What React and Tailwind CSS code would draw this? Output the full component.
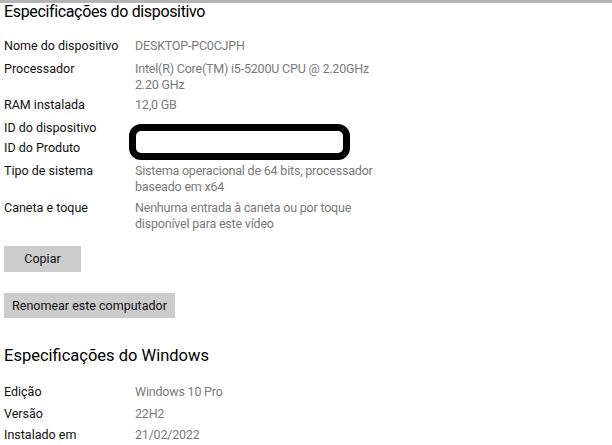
export default function App() {
  const font = { fontFamily: 'Roboto, "Open Sans", sans-serif' };
  return (
    <div className="relative h-[445px] w-[612px] overflow-hidden bg-white text-[12.5px] leading-[16px] text-[#111]" style={font}>
      <div className="h-[3px] bg-[#b4b4b4]" />
      <div className="pl-[4px]">
        <h1 className="-mt-[1px] text-[16px] leading-[20px] tracking-[-0.35px] font-normal text-black">Especificações do dispositivo</h1>

        <div className="mt-[16px] grid grid-cols-[131px_1fr]">
          <div>Nome do dispositivo</div>
          <div className="tracking-[-0.2px] text-[#7a7a7a]">DESKTOP-PC0CJPH</div>
        </div>
        <div className="mt-[7px] grid grid-cols-[131px_1fr]">
          <div>Processador</div>
          <div className="tracking-[-0.2px] text-[#7a7a7a]">Intel(R) Core(TM) i5-5200U CPU @ 2.20GHz<br />2.20 GHz</div>
        </div>
        <div className="mt-[4px] grid grid-cols-[131px_1fr]">
          <div>RAM instalada</div>
          <div className="tracking-[-0.2px] text-[#7a7a7a]">12,0 GB</div>
        </div>
        <div className="mt-[7px] grid grid-cols-[131px_1fr]">
          <div>ID do dispositivo</div>
          <div />
        </div>
        <div className="mt-[4px] grid grid-cols-[131px_1fr]">
          <div>ID do Produto</div>
          <div />
        </div>
        <div className="mt-[7px] grid grid-cols-[131px_1fr]">
          <div>Tipo de sistema</div>
          <div className="tracking-[-0.2px] text-[#7a7a7a]">Sistema operacional de 64 bits, processador<br />baseado em x64</div>
        </div>
        <div className="mt-[5px] grid grid-cols-[131px_1fr]">
          <div>Caneta e toque</div>
          <div className="tracking-[-0.2px] text-[#7a7a7a]">Nenhuma entrada à caneta ou por toque<br />disponível para este vídeo</div>
        </div>

        <button className="mt-[14px] block h-[26px] w-[77px] bg-[#cccccc] text-[12.5px] text-[#111]">Copiar</button>
        <button className="mt-[21px] block h-[25px] w-[171px] bg-[#cccccc] text-[12.5px] text-[#111]">Renomear este computador</button>

        <h2 className="mt-[28px] text-[16.5px] leading-[20px] font-normal text-black">Especificações do Windows</h2>

        <div className="mt-[18px] grid grid-cols-[131px_1fr]">
          <div>Edição</div>
          <div className="tracking-[-0.2px] text-[#7a7a7a]">Windows 10 Pro</div>
        </div>
        <div className="mt-[6px] grid grid-cols-[131px_1fr]">
          <div>Versão</div>
          <div className="tracking-[-0.2px] text-[#7a7a7a]">22H2</div>
        </div>
        <div className="mt-[5px] grid grid-cols-[131px_1fr]">
          <div>Instalado em</div>
          <div className="tracking-[-0.2px] text-[#7a7a7a]">21/02/2022</div>
        </div>
      </div>

      <div className="absolute left-[129px] top-[124px] h-[36px] w-[221px] rounded-[12px] border-[7px] border-black" />
    </div>
  );
}
